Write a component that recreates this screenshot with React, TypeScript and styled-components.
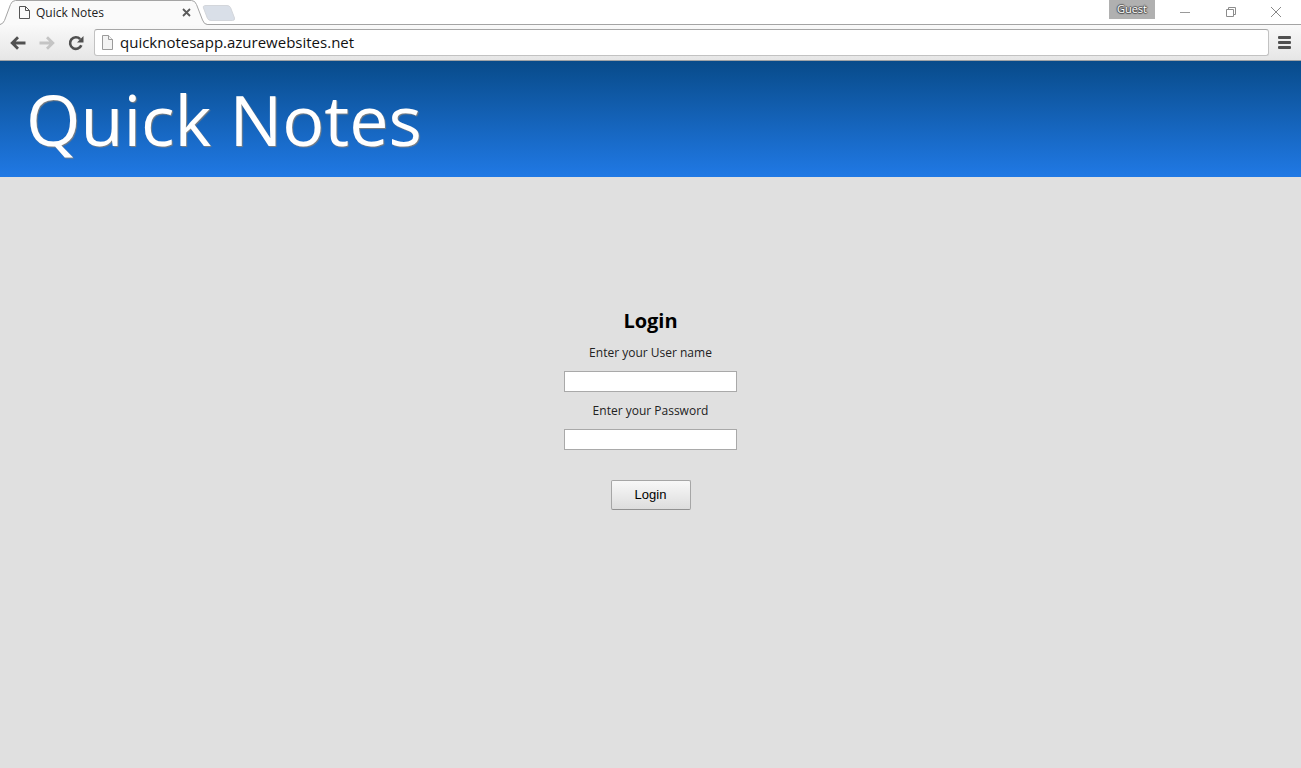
import React from "react";
import styled, { createGlobalStyle } from "styled-components";

const GlobalStyle = createGlobalStyle`
  *, *::before, *::after { box-sizing: border-box; }
  body { margin: 0; font-family: "Open Sans", "Noto Sans", sans-serif; color: #000; }
`;

const Window = styled.div`
  display: flex;
  flex-direction: column;
  min-height: 100vh;
  background: #e0e0e0;
`;

const TabStrip = styled.div`
  display: flex;
  align-items: flex-start;
  justify-content: space-between;
  height: 25px;
  background: linear-gradient(#a4a4a4, #a4a4a4) bottom / 100% 1px no-repeat #fff;
`;

const Tab = styled.div`
  position: relative;
  display: flex;
  align-items: center;
  width: 240px;
  height: 25px;
  padding-left: 19px;
`;

const TabShape = styled.svg`
  position: absolute;
  inset: 0;
`;

const TabTitle = styled.span`
  position: relative;
  width: 152px;
  padding-left: 6px;
  font: 12px/24px "Open Sans", sans-serif;
  color: #222;
`;

const Glyph = styled.svg`
  position: relative;
  display: block;
  flex: none;
`;

const IconButton = styled.button`
  position: relative;
  display: flex;
  align-items: center;
  justify-content: center;
  flex: none;
  padding: 0;
  border: 0;
  background: none;
`;

const TabClose = styled(IconButton)`
  width: 9px;
  height: 24px;
`;

const WindowControls = styled.div`
  display: flex;
  align-items: flex-start;
  padding-right: 2px;
`;

const Guest = styled.span`
  width: 46px;
  height: 19px;
  margin-right: 7px;
  background: #b0b0b0;
  color: #fff;
  font: 11px/18px "Open Sans", sans-serif;
  text-align: center;
  text-shadow: 0 1px 1px #444, 0 -1px 1px #555, 1px 0 1px #555, -1px 0 1px #555;
`;

const WindowButton = styled(IconButton)`
  width: 46px;
  height: 24px;
`;

const RestoreButton = styled(WindowButton)`
  width: 45px;
`;

const Toolbar = styled.div`
  display: flex;
  align-items: center;
  height: 36px;
  padding: 0 9px;
  background: linear-gradient(#f9f9f9, #e6e6e6);
  border-bottom: 1px solid #a0a3a6;
`;

const NavButton = styled(IconButton)`
  width: 17px;
  height: 24px;
  margin-right: 12px;
`;

const MenuButton = styled(IconButton)`
  width: 15px;
  height: 24px;
`;

const AddressBar = styled.div`
  display: flex;
  align-items: center;
  flex: 1;
  height: 27px;
  margin: 0 8px 0 -2px;
  padding-left: 7px;
  border: 1px solid #c2c2c2;
  border-top-color: #a6a6a6;
  border-radius: 3px;
  background: #fff;
`;

const AddressInput = styled.input`
  flex: 1;
  min-width: 0;
  height: 24px;
  padding: 0 0 2px 7px;
  border: 0;
  outline: 0;
  background: transparent;
  color: #111;
  font: 15px/22px "Open Sans", sans-serif;
`;

const Banner = styled.header`
  padding: 9px 26px;
  background: linear-gradient(#084b8a, #2079e5);
`;

const Title = styled.h1`
  margin: 0;
  color: #fff;
  font-size: 70px;
  font-weight: 400;
  line-height: 98px;
  text-shadow: 1px 1px 1px #808080;
`;

const LoginForm = styled.form`
  display: flex;
  flex-direction: column;
  align-items: center;
  padding-top: 130px;
`;

const Heading = styled.h2`
  margin: 0 0 8px;
  font-size: 20px;
  font-weight: 700;
  line-height: 28px;
`;

const Label = styled.label`
  font-size: 12px;
  line-height: 20px;
  color: #222;
`;

const Field = styled.input`
  width: 173px;
  height: 21px;
  margin: 8px 0 9px;
  padding: 1px 4px;
  border: 1px solid #a9a9a9;
  border-radius: 0;
  outline: 0;
  background: #fff;
`;

const Submit = styled.button`
  width: 80px;
  height: 30px;
  margin-top: 21px;
  padding: 0;
  border: 1px solid #a6a6a6;
  border-bottom-color: #919191;
  border-radius: 2px;
  background: linear-gradient(#f8f8f8, #dddddd);
  color: #000;
  font: 13px/20px "Liberation Sans", Arial, sans-serif;
`;

function PageIcon({ height, stroke, fill }: { height: number; stroke: string; fill: string }) {
  return (
    <Glyph width="11" height={height} viewBox={`0 0 11 ${height}`} fill={fill} stroke={stroke} aria-hidden="true">
      <path d={`M.5 .5H6.5L10.5 4.5V${height - 0.5}H.5Z`} />
      <path d="M6.5 .5V4.5H10.5" />
    </Glyph>
  );
}

export default function App() {
  return (
    <Window>
      <GlobalStyle />
      <TabStrip>
        <Tab>
          <TabShape width="240" height="25" viewBox="0 0 240 25" aria-hidden="true">
            <path d="M206 5.5H227Q229.500 5.5 230.500 7.5L234.500 18Q235 20.500 232.500 20.500H211Q208.500 20.500 207.500 18.500L203.500 8Q202.500 5.500 206 5.500Z" fill="#d9dfe8" stroke="#d3d6db" />
            <path d="M0 24.500Q3 24 4.500 20.500L10.500 4.500Q12 .5 15.500 .5H191.500Q195 .5 196.500 4.500L202.500 20Q204 24.500 207.500 24.500V25H0Z" fill="#fafafa" />
            <path d="M0 24.500Q3 24 4.500 20.500L10.500 4.500Q12 .5 15.500 .5H191.500Q195 .5 196.500 4.500L202.500 20Q204 24.500 207.500 24.500H240" fill="none" stroke="#a4a4a4" />
          </TabShape>
          <PageIcon height={13} stroke="#555" fill="none" />
          <TabTitle>Quick Notes</TabTitle>
          <TabClose type="button" aria-label="Close tab">
            <Glyph width="9" height="9" viewBox="0 0 9 9" stroke="#5a5a5a" strokeWidth="1.800">
              <path d="M1 1L8 8M8 1L1 8" />
            </Glyph>
          </TabClose>
        </Tab>
        <WindowControls>
          <Guest>Guest</Guest>
          <WindowButton type="button" aria-label="Minimize">
            <Glyph width="10" height="10" viewBox="0 0 10 10" stroke="#999">
              <path d="M0 5.500H10" />
            </Glyph>
          </WindowButton>
          <RestoreButton type="button" aria-label="Restore">
            <Glyph width="10" height="10" viewBox="0 0 10 10" stroke="#8c8c8c" fill="none">
              <path d="M.5 2.500H7.500V9.500H.5ZM2.500 2.500V.5H9.500V7.500H7.500" />
            </Glyph>
          </RestoreButton>
          <WindowButton type="button" aria-label="Close">
            <Glyph width="10" height="10" viewBox="0 0 10 10" stroke="#888">
              <path d="M0 0L10 10M10 0L0 10" />
            </Glyph>
          </WindowButton>
        </WindowControls>
      </TabStrip>
      <Toolbar>
        <NavButton type="button" aria-label="Back">
          <Glyph width="16" height="14" viewBox="0 0 16 14" fill="none" stroke="#505050" strokeWidth="2.800">
            <path d="M15.500 7H2.500M8 1.200L2.200 7L8 12.800" />
          </Glyph>
        </NavButton>
        <NavButton type="button" aria-label="Forward">
          <Glyph width="16" height="14" viewBox="0 0 16 14" fill="none" stroke="#c4c4c4" strokeWidth="2.800">
            <path d="M.5 7H13.500M8 1.200L13.800 7L8 12.800" />
          </Glyph>
        </NavButton>
        <NavButton type="button" aria-label="Reload">
          <Glyph width="16" height="16" viewBox="0 0 16 16" fill="none" stroke="#505050" strokeWidth="2.600">
            <path d="M13.300 10.200A5.800 5.800 0 1 1 12.200 4.200" />
            <path d="M15.500 1V7.500H9Z" fill="#505050" stroke="none" />
          </Glyph>
        </NavButton>
        <AddressBar>
          <PageIcon height={15} stroke="#9b9b9b" fill="#f3f3f3" />
          <AddressInput aria-label="Address" defaultValue="quicknotesapp.azurewebsites.net" />
        </AddressBar>
        <MenuButton type="button" aria-label="Menu">
          <Glyph width="13" height="13" viewBox="0 0 13 13" fill="#505050">
            <rect width="13" height="3" rx="1" />
            <rect y="5" width="13" height="3" rx="1" />
            <rect y="10" width="13" height="3" rx="1" />
          </Glyph>
        </MenuButton>
      </Toolbar>
      <Banner>
        <Title>Quick Notes</Title>
      </Banner>
      <main>
        <LoginForm onSubmit={(e: React.FormEvent) => e.preventDefault()}>
          <Heading>Login</Heading>
          <Label htmlFor="username">Enter your User name</Label>
          <Field id="username" type="text" />
          <Label htmlFor="password">Enter your Password</Label>
          <Field id="password" type="password" />
          <Submit type="submit">Login</Submit>
        </LoginForm>
      </main>
    </Window>
  );
}
